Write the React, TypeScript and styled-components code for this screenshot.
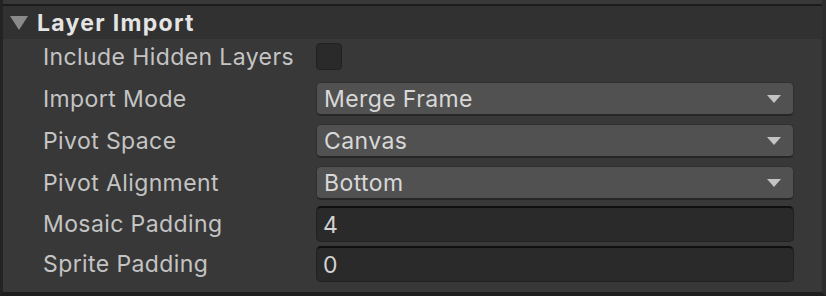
import React, { FC } from 'react';
import styled, { createGlobalStyle } from 'styled-components';

const GlobalStyle = createGlobalStyle`
    html, body {
        margin: 0;
        padding: 0;
        background: #383838;
    }

    body {
        font-family: Inter, 'Noto Sans', sans-serif;
        -webkit-font-smoothing: antialiased;
    }
`;

type RowKind = 'toggle' | 'popup' | 'text';

const rowHeights: Record<RowKind, number> = {
    toggle: 39,
    popup: 42,
    text: 40,
};

const Panel = styled.div`
    width: 826px;
    height: 296px;
    box-sizing: border-box;
    padding-top: 4px;
    background: #383838;
    border-left: 3px solid #232323;
    border-right: 4px solid #2d2d2d;
    border-bottom: 4px solid #1e1e1e;
    display: flex;
    flex-direction: column;
`;

const Header = styled.div`
    height: 35px;
    flex-shrink: 0;
    box-sizing: border-box;
    padding-top: 1px;
    border-top: 2px solid #1c1c1c;
    background: #313131;
    display: flex;
    align-items: center;
    gap: 9px;
    padding-left: 7px;
    color: #e4e4e4;
    font-size: 23px;
    font-weight: 700;
    letter-spacing: 1.3px;
`;

const Foldout = styled.svg`
    width: 18px;
    height: 14px;
    fill: #8a8a8a;
`;

const Rows = styled.div`
    display: flex;
    flex-direction: column;
    padding-left: 40px;
    padding-right: 28px;
`;

const Row = styled.div<{ $kind: RowKind }>`
    height: ${({ $kind }) => rowHeights[$kind]}px;
    flex-shrink: 0;
    display: grid;
    grid-template-columns: 273px 1fr;
    align-items: ${({ $kind }) => ($kind === 'toggle' ? 'start' : 'center')};
    padding-top: ${({ $kind }) => ($kind === 'toggle' ? '4px' : '0')};
    box-sizing: border-box;
`;

const Label = styled.div<{ $kind: RowKind }>`
    color: #c4c4c4;
    font-size: 23px;
    letter-spacing: 0.4px;
    line-height: ${({ $kind }) => ($kind === 'toggle' ? '28px' : '34px')};
    white-space: nowrap;
`;

const Checkbox = styled.div`
    width: 24px;
    height: 25px;
    border: 1px solid #212121;
    border-radius: 4px;
    background: #2a2a2a;
`;

const Popup = styled.div`
    height: 34px;
    box-sizing: border-box;
    border-radius: 5px;
    background: #515151;
    border: 1px solid #303030;
    border-bottom: 2px solid #262626;
    display: flex;
    align-items: center;
    justify-content: space-between;
    padding: 0 12px 0 7px;
    color: #d8d8d8;
    font-size: 23px;
    letter-spacing: 0.4px;
`;

const Arrow = styled.svg`
    width: 14px;
    height: 8px;
    fill: #c4c4c4;
`;

const TextField = styled.div`
    height: 36px;
    box-sizing: border-box;
    border-radius: 5px;
    background: #2a2a2a;
    border: 1px solid #212121;
    border-top: 2px solid #0f0f0f;
    display: flex;
    align-items: center;
    padding-left: 6px;
    color: #d2d2d2;
    font-size: 23px;
    letter-spacing: 0.4px;
`;

interface Field {
    label: string;
    kind: RowKind;
    value?: string;
}

const fields: Field[] = [
    { label: 'Include Hidden Layers', kind: 'toggle' },
    { label: 'Import Mode', kind: 'popup', value: 'Merge Frame' },
    { label: 'Pivot Space', kind: 'popup', value: 'Canvas' },
    { label: 'Pivot Alignment', kind: 'popup', value: 'Bottom' },
    { label: 'Mosaic Padding', kind: 'text', value: '4' },
    { label: 'Sprite Padding', kind: 'text', value: '0' },
];

const renderControl = (field: Field) => {
    if (field.kind === 'toggle') {
        return <Checkbox />;
    }

    if (field.kind === 'popup') {
        return (
            <Popup>
                {field.value}
                <Arrow viewBox="0 0 14 8">
                    <polygon points="0,0 14,0 7,8" />
                </Arrow>
            </Popup>
        );
    }

    return <TextField>{field.value}</TextField>;
};

const App: FC = () => (
    <>
        <GlobalStyle />
        <Panel>
            <Header>
                <Foldout viewBox="0 0 18 14">
                    <polygon points="0,0 18,0 9,14" />
                </Foldout>
                Layer Import
            </Header>
            <Rows>
                {fields.map((field) => (
                    <Row key={field.label} $kind={field.kind}>
                        <Label $kind={field.kind}>{field.label}</Label>
                        {renderControl(field)}
                    </Row>
                ))}
            </Rows>
        </Panel>
    </>
);

export default App;
